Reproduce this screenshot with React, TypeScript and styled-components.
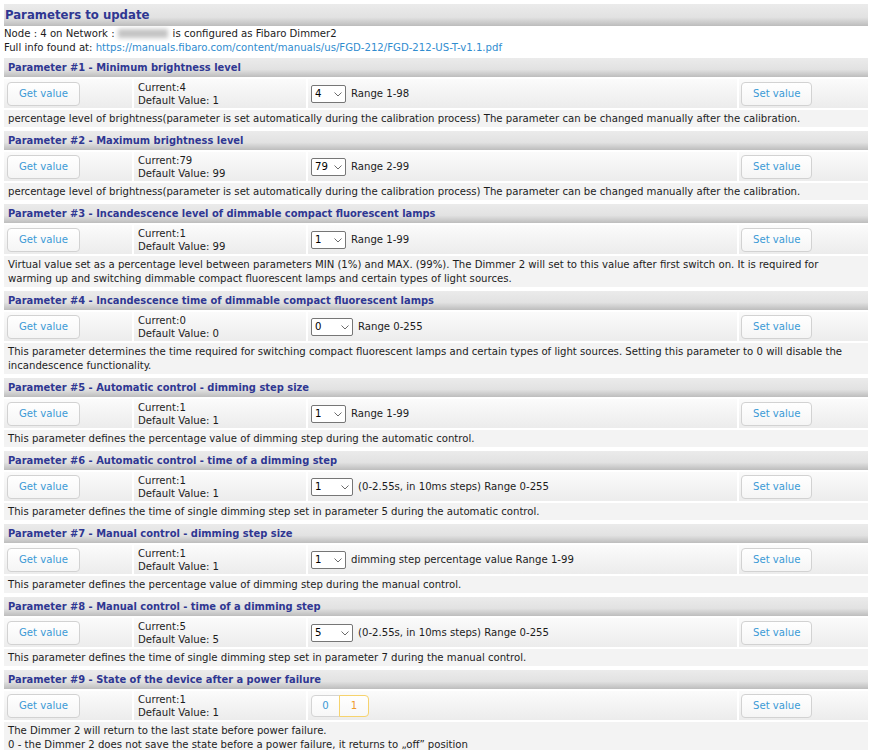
import React from "react";
import styled, { createGlobalStyle } from "styled-components";

const GlobalStyle = createGlobalStyle`
  html, body { margin: 0; padding: 0; background: #ffffff; }
  body {
    font-family: "DejaVu Sans Condensed", "DejaVu Sans", sans-serif;
    font-size: 11.25px;
    color: #1c1c1c;
  }
`;

const Page = styled.div`
  padding: 4px 5px 0 4px;
`;

const Title = styled.h2`
  margin: 0;
  height: 22px;
  line-height: 22px;
  padding-left: 1px;
  font-size: 13px;
  font-weight: bold;
  color: #2f3792;
  background: linear-gradient(#ebebeb 0%, #e2e2e2 60%, #bcbcbc 100%);
`;

const Info = styled.div`
  line-height: 14px;
  padding: 1px 0 3px 0;
`;

const Blur = styled.span`
  display: inline-block;
  width: 50px;
  height: 9px;
  margin: 0 5px 0 3px;
  vertical-align: -1px;
  background: #c4c4c4;
  filter: blur(2px);
`;

const Link = styled.a`
  color: #2f8ccf;
  text-decoration: none;
`;

const Block = styled.section`
  display: grid;
  grid-template-columns: 128px 172px 1fr 129px;
  gap: 2px;
  margin-bottom: 4px;
`;

const Header = styled.div`
  grid-column: 1 / -1;
  height: 19px;
  line-height: 19px;
  padding-left: 4px;
  font-size: 11px;
  font-weight: bold;
  color: #2f3792;
  background: linear-gradient(#ebebeb 0%, #e2e2e2 60%, #bdbdbd 100%);
`;

const Cell = styled.div<{ $pad: number; $column?: boolean }>`
  height: 29px;
  display: flex;
  flex-direction: ${(p) => (p.$column ? "column" : "row")};
  justify-content: ${(p) => (p.$column ? "center" : "flex-start")};
  align-items: ${(p) => (p.$column ? "flex-start" : "center")};
  gap: 5px;
  padding-left: ${(p) => p.$pad}px;
  background: linear-gradient(#fbfbfb, #ececec);
  line-height: 13px;
`;

const Stack = styled.div`
  display: flex;
  flex-direction: column;
  line-height: 13px;
`;

const Desc = styled.div`
  grid-column: 1 / -1;
  padding: 2px 4px 1px 4px;
  line-height: 14px;
  background: #f3f3f3;
  white-space: pre-line;
`;

const Button = styled.button`
  height: 24px;
  padding: 0 11px;
  border: 1px solid #d2d2d2;
  border-radius: 4px;
  background: linear-gradient(#ffffff, #f5f5f5);
  color: #3b9ad6;
  font-family: inherit;
  font-size: 11.25px;
  cursor: pointer;
`;

const SelectWrap = styled.span<{ $w: number }>`
  position: relative;
  display: inline-block;
  width: ${(p) => p.$w}px;
  height: 18px;
`;

const Select = styled.select`
  appearance: none;
  -webkit-appearance: none;
  width: 100%;
  height: 18px;
  margin: 0;
  padding: 0 0 0 3px;
  border: 1px solid #767676;
  border-radius: 2px;
  background: #ffffff;
  color: #000;
  font-family: inherit;
  font-size: 11.25px;
  outline: none;
`;

const Chevron = styled.svg`
  position: absolute;
  right: 4px;
  top: 7px;
  pointer-events: none;
`;

const Toggle = styled.div`
  display: flex;
`;

const ToggleBtn = styled.button<{ $active?: boolean; $first?: boolean }>`
  width: ${(p) => (p.$first ? 29 : 30)}px;
  height: 22px;
  padding: 0;
  border: 1px solid ${(p) => (p.$active ? "#f6d36e" : "#d4d4d4")};
  margin-left: ${(p) => (p.$first ? 0 : -1)}px;
  border-radius: ${(p) => (p.$first ? "4px 0 0 4px" : "0 4px 4px 0")};
  background: linear-gradient(#ffffff, #f7f7f7);
  color: ${(p) => (p.$active ? "#f09a2c" : "#3b9ad6")};
  font-family: inherit;
  font-size: 11.25px;
  position: relative;
  z-index: ${(p) => (p.$active ? 1 : 0)};
`;

type Param = {
  n: number;
  title: string;
  current: string;
  def: string;
  value?: string;
  wide?: boolean;
  range?: string;
  toggle?: boolean;
  desc: string;
};

const CAL =
  "percentage level of brightness(parameter is set automatically during the calibration process) The parameter can be changed manually after the calibration.";

const params: Param[] = [
  { n: 1, title: "Minimum brightness level", current: "4", def: "1", value: "4", range: "Range 1-98", desc: CAL },
  { n: 2, title: "Maximum brightness level", current: "79", def: "99", value: "79", range: "Range 2-99", desc: CAL },
  {
    n: 3,
    title: "Incandescence level of dimmable compact fluorescent lamps",
    current: "1",
    def: "99",
    value: "1",
    range: "Range 1-99",
    desc:
      "Virtual value set as a percentage level between parameters MIN (1%) and MAX. (99%). The Dimmer 2 will set to this value after first switch on. It is required for warming up and switching dimmable compact fluorescent lamps and certain types of light sources.",
  },
  {
    n: 4,
    title: "Incandescence time of dimmable compact fluorescent lamps",
    current: "0",
    def: "0",
    value: "0",
    wide: true,
    range: "Range 0-255",
    desc:
      "This parameter determines the time required for switching compact fluorescent lamps and certain types of light sources. Setting this parameter to 0 will disable the incandescence functionality.",
  },
  {
    n: 5,
    title: "Automatic control - dimming step size",
    current: "1",
    def: "1",
    value: "1",
    range: "Range 1-99",
    desc: "This parameter defines the percentage value of dimming step during the automatic control.",
  },
  {
    n: 6,
    title: "Automatic control - time of a dimming step",
    current: "1",
    def: "1",
    value: "1",
    wide: true,
    range: "(0-2.55s, in 10ms steps) Range 0-255",
    desc: "This parameter defines the time of single dimming step set in parameter 5 during the automatic control.",
  },
  {
    n: 7,
    title: "Manual control - dimming step size",
    current: "1",
    def: "1",
    value: "1",
    range: "dimming step percentage value Range 1-99",
    desc: "This parameter defines the percentage value of dimming step during the manual control.",
  },
  {
    n: 8,
    title: "Manual control - time of a dimming step",
    current: "5",
    def: "5",
    value: "5",
    wide: true,
    range: "(0-2.55s, in 10ms steps) Range 0-255",
    desc: "This parameter defines the time of single dimming step set in parameter 7 during the manual control.",
  },
  {
    n: 9,
    title: "State of the device after a power failure",
    current: "1",
    def: "1",
    toggle: true,
    desc:
      "The Dimmer 2 will return to the last state before power failure.\n0 - the Dimmer 2 does not save the state before a power failure, it returns to \u201eoff\u201d position\n1 - the Dimmer 2 restores its state before power failure.",
  },
];

function ValueSelect({ value, wide }: { value: string; wide?: boolean }) {
  return (
    <SelectWrap $w={wide ? 42 : 35}>
      <Select defaultValue={value}>
        <option value={value}>{value}</option>
      </Select>
      <Chevron width="8" height="5" viewBox="0 0 8 5">
        <path d="M0.5 0.5 L4 4 L7.5 0.5" fill="none" stroke="#6b6b6b" strokeWidth="1" />
      </Chevron>
    </SelectWrap>
  );
}

function ParamBlock({ p }: { p: Param }) {
  return (
    <Block>
      <Header>
        Parameter #{p.n} - {p.title}
      </Header>
      <Cell $pad={3}>
        <Button>Get value</Button>
      </Cell>
      <Cell $pad={4} $column>
        <Stack>
          <span>Current:{p.current}</span>
          <span>Default Value: {p.def}</span>
        </Stack>
      </Cell>
      <Cell $pad={3}>
        {p.toggle ? (
          <Toggle>
            <ToggleBtn $first>0</ToggleBtn>
            <ToggleBtn $active>1</ToggleBtn>
          </Toggle>
        ) : (
          <>
            <ValueSelect value={p.value || ""} wide={p.wide} />
            <span>{p.range}</span>
          </>
        )}
      </Cell>
      <Cell $pad={2}>
        <Button>Set value</Button>
      </Cell>
      <Desc>{p.desc}</Desc>
    </Block>
  );
}

export default function App() {
  return (
    <>
      <GlobalStyle />
      <Page>
        <Title>Parameters to update</Title>
        <Info>
          Node : 4 on Network :<Blur />is configured as Fibaro Dimmer2
          <br />
          Full info found at:{" "}
          <Link href="#">https://manuals.fibaro.com/content/manuals/us/FGD-212/FGD-212-US-T-v1.1.pdf</Link>
        </Info>
        {params.map((p) => (
          <ParamBlock key={p.n} p={p} />
        ))}
      </Page>
    </>
  );
}
